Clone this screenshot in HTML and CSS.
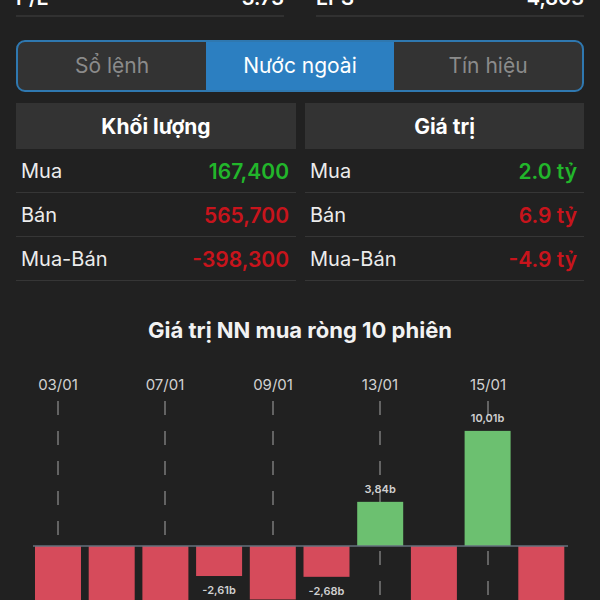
FILE: index.html
```html
<!DOCTYPE html>
<html lang="vi">
<head>
  <meta charset="UTF-8" />
  <meta name="viewport" content="width=device-width, initial-scale=1.0"/>
  <title>Nước ngoài</title>
  <link rel="stylesheet" href="styles.css">
</head>
<body>
  <div class="stats">
    <div class="stat"><span>P/E</span><span class="num">3.73</span></div>
    <div class="stat"><span>EPS</span><span class="num">4,803</span></div>
  </div>

  <div class="tabs">
    <a class="tab">Sổ lệnh</a>
    <a class="tab active">Nước ngoài</a>
    <a class="tab">Tín hiệu</a>
  </div>

  <div class="tables">
    <div class="table">
      <div class="table-head">Khối lượng</div>
      <div class="row"><span>Mua</span><span class="up">167,400</span></div>
      <div class="row"><span>Bán</span><span class="down">565,700</span></div>
      <div class="row"><span>Mua-Bán</span><span class="down">-398,300</span></div>
    </div>
    <div class="table">
      <div class="table-head">Giá trị</div>
      <div class="row"><span>Mua</span><span class="up">2.0 tỷ</span></div>
      <div class="row"><span>Bán</span><span class="down">6.9 tỷ</span></div>
      <div class="row"><span>Mua-Bán</span><span class="down">-4.9 tỷ</span></div>
    </div>
  </div>

  <h3 class="chart-title">Giá trị NN mua ròng 10 phiên</h3>

  <svg class="chart" width="600" height="260" viewBox="0 350 600 260">
    <g class="dates">
      <text x="58" y="389">03/01</text>
      <text x="165" y="389">07/01</text>
      <text x="273" y="389">09/01</text>
      <text x="380" y="389">13/01</text>
      <text x="488" y="389">15/01</text>
    </g>
    <g class="grid">
      <line x1="58" y1="400" x2="58" y2="620" />
      <line x1="165" y1="400" x2="165" y2="620" />
      <line x1="273" y1="400" x2="273" y2="620" />
      <line x1="380" y1="400" x2="380" y2="620" />
      <line x1="488" y1="400" x2="488" y2="620" />
    </g>
    <g class="bars"></g>
    <line class="zero" x1="33" y1="545" x2="568" y2="545" />
    <g class="values"></g>
  </svg>

  <script>
    const sessions = [-7.1, -6.5, -8.2, -2.61, -4.65, -2.68, 3.84, -6.4, 10.01, -5.2];
    const scale = 11.5;
    const zero = 545;
    const ns = "http://www.w3.org/2000/svg";
    const bars = document.querySelector(".bars");
    const values = document.querySelector(".values");

    sessions.forEach((v, i) => {
      const cx = 58 + i * 53.7;
      const h = Math.abs(v) * scale;
      const rect = document.createElementNS(ns, "rect");
      rect.setAttribute("x", cx - 23);
      rect.setAttribute("width", 46);
      rect.setAttribute("y", v > 0 ? zero - h : zero);
      rect.setAttribute("height", h);
      rect.setAttribute("class", v > 0 ? "pos" : "neg");
      bars.appendChild(rect);

      const label = document.createElementNS(ns, "text");
      label.setAttribute("x", cx);
      label.setAttribute("y", v > 0 ? zero - h - 9 : zero + h + 18);
      label.textContent = v.toFixed(2).replace(".", ",") + "b";
      values.appendChild(label);
    });
  </script>
</body>
</html>
```

FILE: styles.css
```css
:root {
  --bg: #212121;
  --panel: #333333;
  --blue: #2c7fc1;
  --green: #22b62b;
  --red: #c8141c;
}

* {
  margin: 0;
  padding: 0;
  box-sizing: border-box;
}

body {
  background: var(--bg);
  color: #ececec;
  font-family: 'Inter', 'Noto Sans', sans-serif;
  width: 600px;
  height: 600px;
  overflow: hidden;
}

.stats {
  display: grid;
  grid-template-columns: 1fr 1fr;
  gap: 32px;
  padding: 0 16px;
  margin-top: -13px;
}

.stat {
  display: flex;
  justify-content: space-between;
  font-size: 20px;
  line-height: 22px;
  font-weight: 600;
  color: #fff;
  padding-bottom: 6px;
  border-bottom: 2px solid #313131;
}

.tabs {
  display: flex;
  margin: 23px 16px 0;
  height: 52px;
  border: 2px solid #2f78b0;
  border-radius: 9px;
  overflow: hidden;
  background: var(--panel);
}

.tab {
  flex: 1;
  display: flex;
  align-items: center;
  justify-content: center;
  font-size: 21px;
  color: #8b8b8b;
  padding-bottom: 2px;
}

.tab.active {
  background: var(--blue);
  color: #fff;
}

.tables {
  display: grid;
  grid-template-columns: 280px 279px;
  gap: 9px;
  margin: 11px 16px 0;
}

.table-head {
  height: 46px;
  background: var(--panel);
  display: flex;
  align-items: center;
  justify-content: center;
  font-size: 21px;
  font-weight: 700;
  color: #fff;
}

.row {
  height: 44px;
  display: flex;
  align-items: center;
  justify-content: space-between;
  padding: 1px 7px 0 5px;
  border-bottom: 1px solid #363636;
  font-size: 20px;
}

.row .up,
.row .down {
  font-size: 21px;
  font-weight: 600;
}

.up {
  color: var(--green);
}

.down {
  color: var(--red);
}

.chart-title {
  margin-top: 36px;
  text-align: center;
  font-size: 22px;
  line-height: 26px;
  font-weight: 700;
  color: #f2f2f2;
}

.chart {
  display: block;
  margin-top: 8px;
}

.dates text {
  font-family: 'Inter', sans-serif;
  font-size: 15px;
  fill: #d2d2d2;
  text-anchor: middle;
}

.grid line {
  stroke: #7a7a7a;
  stroke-width: 1.5;
  stroke-dasharray: 14 16;
}

.bars .pos {
  fill: #6cc070;
}

.bars .neg {
  fill: #d64b5b;
}

.zero {
  stroke: #64717d;
  stroke-width: 1.5;
}

.values text {
  font-family: 'Inter', sans-serif;
  font-size: 11px;
  font-weight: 600;
  fill: #d0d0d0;
  text-anchor: middle;
}
```
